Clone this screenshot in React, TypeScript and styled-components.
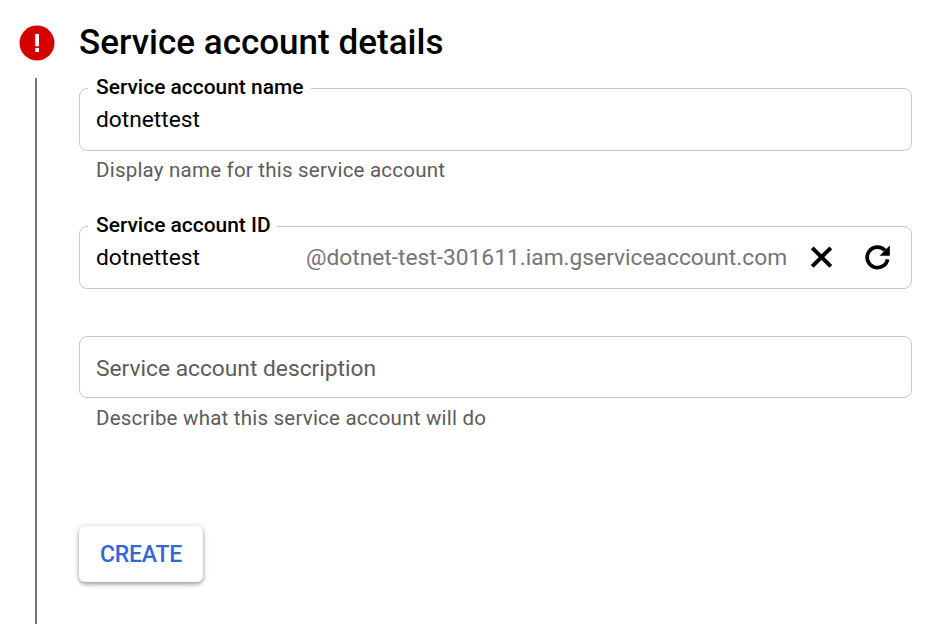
import React from "react";
import styled, { createGlobalStyle } from "styled-components";

const GlobalStyle = createGlobalStyle`
  * { box-sizing: border-box; }
  body { margin: 0; background: #fff; font-family: Roboto, sans-serif; color: #000; }
`;

const Page = styled.main`
  display: flex;
  width: 940px;
  height: 635px;
  overflow: hidden;
`;

const Rail = styled.aside`
  display: flex;
  flex-direction: column;
  align-items: center;
  width: 35px;
  margin-left: 19px;
  padding-top: 25px;
`;

const StepLine = styled.div`
  width: 2px;
  height: 546px;
  margin: 17px 2px 0 0;
  background: #757575;
`;

const Content = styled.section`
  width: 833px;
  margin-left: 25px;
`;

const Title = styled.h1`
  margin: 0;
  padding-top: 22px;
  height: 88px;
  font-size: 35px;
  font-weight: 500;
  line-height: 42px;
  letter-spacing: 0.02px;
  white-space: nowrap;
`;

const Field = styled.div<{ $height: number }>`
  position: relative;
  display: flex;
  align-items: center;
  width: 833px;
  height: ${(p) => p.$height}px;
  padding: 0 16px;
  border: 1px solid #c9c9c9;
  border-radius: 8px;
`;

const FieldLabel = styled.label<{ $width: number }>`
  position: absolute;
  top: -14px;
  left: 8px;
  width: ${(p) => p.$width}px;
  padding-left: 8px;
  background: #fff;
  font-size: 20.95px;
  font-weight: 500;
  line-height: 24px;
  white-space: nowrap;
`;

const Value = styled.span`
  flex: none;
  width: 210px;
  font-size: 22.75px;
  line-height: 28px;
`;

const Domain = styled.span`
  flex: none;
  width: 499px;
  color: #757575;
  font-size: 22.75px;
  line-height: 28px;
  white-space: nowrap;
`;

const Placeholder = styled.span`
  padding-top: 2px;
  color: #5c5c5c;
  font-size: 22.75px;
`;

const Hint = styled.p<{ $gap: number; $top?: number }>`
  height: 24px;
  margin: ${(p) => p.$top ?? 7}px 0 ${(p) => p.$gap}px 17px;
  color: #5c5c5c;
  font-size: 20.5px;
  line-height: 24px;
  letter-spacing: 0.22px;
`;

const IconButton = styled.button`
  display: flex;
  flex: none;
  width: 32px;
  height: 32px;
  margin-right: 24px;
  padding: 0;
  border: 0;
  background: none;
`;

const CreateButton = styled.button`
  width: 124px;
  height: 56px;
  padding: 0;
  border: 0;
  border-radius: 6px;
  background: #fff;
  color: #3367d6;
  box-shadow: 0 2px 4px rgba(0, 0, 0, 0.38), 0 0 8px rgba(0, 0, 0, 0.08);
  font: 500 23px Roboto, sans-serif;
  letter-spacing: -0.2px;
`;

export default function App() {
  return (
    <>
      <GlobalStyle />
      <Page>
        <Rail>
          <svg width="36" height="36" viewBox="0 0 36 36">
            <circle cx="18" cy="18" r="17.5" fill="#d50000" />
            <path d="M16.2 9h3.8v12.2h-3.8zM16.2 23h3.8v4h-3.8z" fill="#fff" />
          </svg>
          <StepLine />
        </Rail>
        <Content>
          <Title>Service account details</Title>
          <Field $height={63}>
            <FieldLabel $width={223}>Service account name</FieldLabel>
            <Value>dotnettest</Value>
          </Field>
          <Hint $gap={44}>Display name for this service account</Hint>
          <Field $height={63}>
            <FieldLabel $width={189}>Service account ID</FieldLabel>
            <Value>dotnettest</Value>
            <Domain>@dotnet-test-301611.iam.gserviceaccount.com</Domain>
            <IconButton aria-label="Clear">
              <svg width="32" height="32" viewBox="0 0 32 32" fill="none" stroke="#000" strokeWidth="4">
                <path d="M7.2 5.8 25.8 24.4M25.8 5.8 7.2 24.4" />
              </svg>
            </IconButton>
            <IconButton aria-label="Refresh">
              <svg width="32" height="32" viewBox="0 0 32 32">
                <path d="M26.6 17.3A10.3 10.3 0 1 1 24 8.3" fill="none" stroke="#000" strokeWidth="3.7" />
                <path d="M28.8 3.6v10.2h-10.2z" />
              </svg>
            </IconButton>
          </Field>
          <Hint $gap={16} />
          <Field $height={62}>
            <Placeholder>Service account description</Placeholder>
          </Field>
          <Hint $top={8} $gap={96}>Describe what this service account will do</Hint>
          <CreateButton>CREATE</CreateButton>
        </Content>
      </Page>
    </>
  );
}
